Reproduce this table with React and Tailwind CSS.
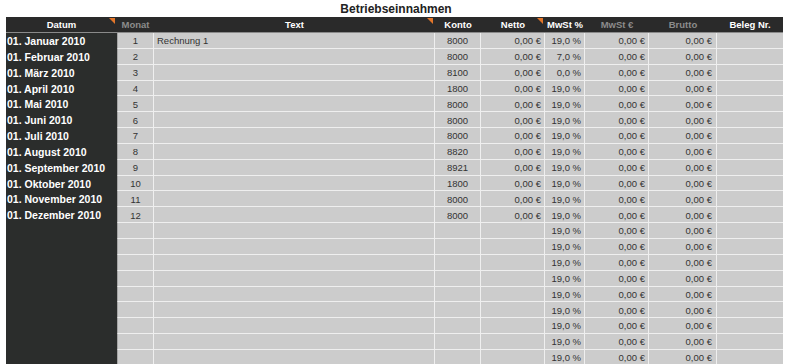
const months = [
  ["01. Januar 2010", "8000", "19,0 %", "Rechnung 1"],
  ["01. Februar 2010", "8000", "7,0 %", ""],
  ["01. März 2010", "8100", "0,0 %", ""],
  ["01. April 2010", "1800", "19,0 %", ""],
  ["01. Mai 2010", "8000", "19,0 %", ""],
  ["01. Juni 2010", "8000", "19,0 %", ""],
  ["01. Juli 2010", "8000", "19,0 %", ""],
  ["01. August 2010", "8820", "19,0 %", ""],
  ["01. September 2010", "8921", "19,0 %", ""],
  ["01. Oktober 2010", "1800", "19,0 %", ""],
  ["01. November 2010", "8000", "19,0 %", ""],
  ["01. Dezember 2010", "8000", "19,0 %", ""],
];

const rows = [
  ...months.map((m, i) => ({ datum: m[0], monat: String(i + 1), text: m[3], konto: m[1], netto: "0,00 €", mwst: m[2] })),
  ...Array.from({ length: 9 }, () => ({ datum: "", monat: "", text: "", konto: "", netto: "", mwst: "19,0 %" })),
];

function Flag() {
  return (
    <svg className="absolute right-[2px] top-0" width="6" height="6" viewBox="0 0 6 6">
      <polygon points="0,0 6,0 6,6" fill="#e3762a" />
    </svg>
  );
}

const cell = "h-full flex items-center pt-[2px] bg-[#cccccc] border-r border-b border-[#efefef] text-[#333] text-[9.5px] overflow-hidden whitespace-nowrap";

export default function App() {
  return (
    <div className="w-[800px] h-[364px] overflow-hidden bg-white" style={{ fontFamily: '"Liberation Sans", Arial, sans-serif' }}>
      <div className="h-[17px] flex items-center justify-center text-[12px] font-bold text-[#222] pr-[8px]">
        Betriebseinnahmen
      </div>

      {/* header */}
      <div className="ml-[6px] w-[777px] h-[16px] flex pt-[1px] bg-[#2a2a2a] border-b border-[#8a8a8a] text-[9.5px] font-bold text-white">
        <div className="relative w-[111px] flex items-center justify-center">Datum<Flag /></div>
        <div className="w-[37px] flex items-center justify-center text-[#8c8c8c]">Monat</div>
        <div className="relative w-[281px] flex items-center justify-center">Text<Flag /></div>
        <div className="w-[46px] flex items-center justify-center">Konto</div>
        <div className="relative w-[64px] flex items-center justify-center">Netto<Flag /></div>
        <div className="w-[40px] flex items-center justify-center">MwSt %</div>
        <div className="w-[64px] flex items-center justify-center text-[#8c8c8c]">MwSt €</div>
        <div className="w-[68px] flex items-center justify-center text-[#8c8c8c]">Brutto</div>
        <div className="w-[66px] flex items-center justify-center">Beleg Nr.</div>
      </div>

      {/* body */}
      <div className="ml-[6px] w-[777px] flex flex-col">
        {rows.map((r, i) => (
          <div key={i} className="h-[15.85px] shrink-0 flex">
            <div className="w-[111px] h-full flex items-center pt-[2px] pl-[1px] bg-[#2b2d2c] text-white font-bold text-[10.5px] whitespace-nowrap">{r.datum}</div>
            <div className={`${cell} w-[37px] justify-center border-l border-l-[#a5a5a5]`}>{r.monat}</div>
            <div className={`${cell} w-[281px] pl-[3px]`}>{r.text}</div>
            <div className={`${cell} w-[46px] justify-center`}>{r.konto}</div>
            <div className={`${cell} w-[64px] justify-end pr-[3px]`}>{r.netto}</div>
            <div className={`${cell} w-[40px] justify-end pr-[3px]`}>{r.mwst}</div>
            <div className={`${cell} w-[64px] justify-end pr-[3px]`}>0,00 €</div>
            <div className={`${cell} w-[68px] justify-end pr-[4px]`}>0,00 €</div>
            <div className={`${cell} w-[66px] border-r-0`}></div>
          </div>
        ))}
      </div>
    </div>
  );
}
